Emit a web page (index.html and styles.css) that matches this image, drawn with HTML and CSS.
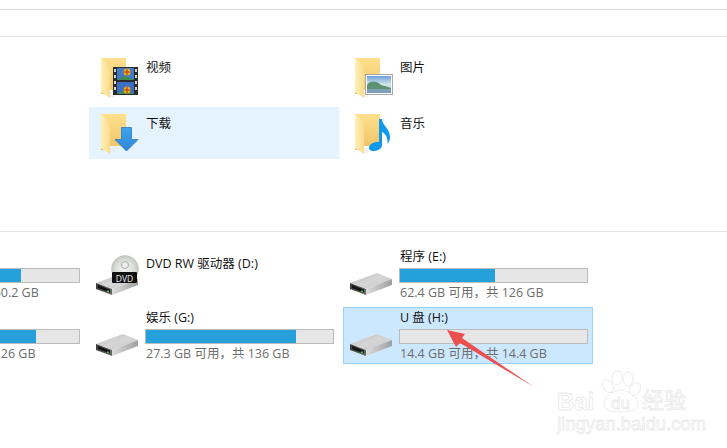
FILE: index.html
```html
<!DOCTYPE html>
<html lang="zh">
<head>
<meta charset="utf-8">
<title>此电脑</title>
<link rel="stylesheet" href="styles.css">
</head>
<body>
<svg class="defs" width="0" height="0" aria-hidden="true">
  <defs>
    <linearGradient id="fback" x1="0" y1="0" x2="0" y2="1"><stop offset="0" stop-color="#fee08d"/><stop offset="1" stop-color="#eec266"/></linearGradient>
    <linearGradient id="fflap" x1="0" y1="0" x2="1" y2="0"><stop offset="0" stop-color="#fff0b4"/><stop offset="1" stop-color="#fbdc8e"/></linearGradient>
    <linearGradient id="dtop" x1="0" y1="0" x2="1" y2="1"><stop offset="0" stop-color="#bdbdbd"/><stop offset=".5" stop-color="#d6d6d6"/><stop offset="1" stop-color="#c6c6c6"/></linearGradient>
    <linearGradient id="dright" x1="0" y1="0" x2="1" y2="0"><stop offset="0" stop-color="#dcdcdc"/><stop offset="1" stop-color="#a0a0a0"/></linearGradient>
    <linearGradient id="dleft" x1="0" y1="0" x2="1" y2="0"><stop offset="0" stop-color="#3c3c3c"/><stop offset="1" stop-color="#6a6a6a"/></linearGradient>
    <linearGradient id="sky" x1="0" y1="0" x2="0" y2="1"><stop offset="0" stop-color="#6f9fdc"/><stop offset=".5" stop-color="#d3e6ea"/><stop offset="1" stop-color="#8fb0bf"/></linearGradient>
    <linearGradient id="arrowblue" x1="0" y1="0" x2="0" y2="1"><stop offset="0" stop-color="#3fa3ee"/><stop offset="1" stop-color="#2f86d6"/></linearGradient>
    <radialGradient id="disc"><stop offset="0" stop-color="#f4f4f4"/><stop offset=".7" stop-color="#d8dcd8"/><stop offset="1" stop-color="#bfc5bf"/></radialGradient>
    <symbol id="folder" viewBox="0 0 48 48">
      <path d="M4 4H29V36H13V40H4Z" fill="url(#fback)"/>
      <path d="M4 4L13 12V44L4 38Z" fill="url(#fflap)"/>
      <path d="M13 44L17 43V38H13Z" fill="#e8e8e8" opacity=".6"/>
    </symbol>
    <symbol id="drive" viewBox="0 0 48 48">
      <path d="M3 36L30 26L45 32L19 42Z" fill="url(#dtop)"/>
      <path d="M19 42L45 32V38L19 48Z" fill="url(#dright)"/>
      <path d="M3 36L19 42V48L3 42Z" fill="url(#dleft)"/>
      <path d="M5 38L17 42.500V45.500L5 41Z" fill="#141414"/>
      <rect x="14" y="43.500" width="2" height="1.500" fill="#35d24a"/>
    </symbol>
  </defs>
</svg>

<main class="page">
  <div class="strip strip-top"></div>
  <div class="strip strip-ribbon"></div>

  <section class="folders">
    <div class="tile folder-tile">
      <svg class="icon" viewBox="0 0 48 48">
        <use href="#folder"/>
        <rect x="16" y="13" width="25" height="28" fill="#2b2b2b"/>
        <g fill="#d8d8c8"><rect x="17" y="15" width="2" height="3"/><rect x="17" y="21" width="2" height="3"/><rect x="17" y="27" width="2" height="3"/><rect x="17" y="33" width="2" height="3"/><rect x="38" y="15" width="2" height="3"/><rect x="38" y="21" width="2" height="3"/><rect x="38" y="27" width="2" height="3"/><rect x="38" y="33" width="2" height="3"/></g>
        <rect x="20" y="14" width="17" height="12" fill="#4478c8"/>
        <rect x="20" y="28" width="17" height="12" fill="#3c6ec4"/>
        <path d="M20 26L28 22L37 26ZM20 40L28 36L37 40Z" fill="#3d8f4c"/>
        <circle cx="30" cy="18" r="3.500" fill="#e8b818"/><circle cx="30" cy="36" r="3.500" fill="#e8b818"/>
        <path d="M26.500 18H33.500M30 14.500V21.500M26.500 36H33.500M30 32.500V39.500" stroke="#b8301c" stroke-width="1"/>
      </svg>
      <span class="folder-name">视频</span>
    </div>
    <div class="tile folder-tile">
      <svg class="icon" viewBox="0 0 48 48">
        <use href="#folder"/>
        <rect x="14.500" y="20.500" width="27" height="20" fill="#fff" stroke="#a8a8a8"/>
        <rect x="16" y="22" width="24" height="17" fill="url(#sky)"/>
        <path d="M16 31C20 26 26 27 30 31L40 34V35H16Z" fill="#5a9272"/>
        <rect x="16" y="35" width="24" height="4" fill="#7e9fb6"/>
      </svg>
      <span class="folder-name">图片</span>
    </div>
    <div class="tile folder-tile is-hover">
      <svg class="icon" viewBox="0 0 48 48">
        <use href="#folder"/>
        <path d="M24.500 17.500H34.500V29.500H41L29.500 41L18 29.500H24.500Z" fill="url(#arrowblue)" stroke="#2a78c4" stroke-width=".8"/>
      </svg>
      <span class="folder-name">下载</span>
    </div>
    <div class="tile folder-tile">
      <svg class="icon" viewBox="0 0 48 48">
        <use href="#folder"/>
        <path d="M28 9H31C31 15 39 19 39 27C39 30 38 32 36.500 34C37 28 35 24 31 22V35C31 39 26 41 22 41C19 41 18 39 18 38C18 34 23 31.500 28 32Z" fill="#0d9aec"/>
      </svg>
      <span class="folder-name">音乐</span>
    </div>
  </section>

  <section class="drives">
    <div class="tile drive-tile">
      <svg class="icon"><use href="#drive"/></svg>
      <div class="drive-body">
        <div class="drive-name">本地磁盘 (C:)</div>
        <div class="bar"><div class="fill" style="width:69%"></div></div>
        <div class="drive-size">15.6 GB 可用，共 50.2 GB</div>
      </div>
    </div>
    <div class="tile drive-tile">
      <svg class="icon" viewBox="0 0 48 48">
        <use href="#drive"/>
        <circle cx="32" cy="22" r="13.500" fill="url(#disc)" stroke="#bbb" stroke-width=".5"/>
        <circle cx="32" cy="18" r="3.500" fill="#eee" stroke="#aaa"/>
        <rect x="19" y="25" width="25" height="11" rx="1" fill="#111"/>
        <text class="dvd-label" x="31.500" y="34.500" text-anchor="middle">DVD</text>
      </svg>
      <div class="drive-body is-single">
        <div class="drive-name">DVD RW 驱动器 (D:)</div>
      </div>
    </div>
    <div class="tile drive-tile">
      <svg class="icon"><use href="#drive"/></svg>
      <div class="drive-body">
        <div class="drive-name">程序 (E:)</div>
        <div class="bar"><div class="fill" style="width:51%"></div></div>
        <div class="drive-size">62.4 GB 可用，共 126 GB</div>
      </div>
    </div>
    <div class="tile drive-tile">
      <svg class="icon"><use href="#drive"/></svg>
      <div class="drive-body">
        <div class="drive-name">软件 (F:)</div>
        <div class="bar"><div class="fill" style="width:77%"></div></div>
        <div class="drive-size">29.1 GB 可用，共 126 GB</div>
      </div>
    </div>
    <div class="tile drive-tile">
      <svg class="icon"><use href="#drive"/></svg>
      <div class="drive-body">
        <div class="drive-name">娱乐 (G:)</div>
        <div class="bar"><div class="fill" style="width:80%"></div></div>
        <div class="drive-size">27.3 GB 可用，共 136 GB</div>
      </div>
    </div>
    <div class="tile drive-tile is-selected">
      <svg class="icon"><use href="#drive"/></svg>
      <div class="drive-body">
        <div class="drive-name">U 盘 (H:)</div>
        <div class="bar"></div>
        <div class="drive-size">14.4 GB 可用，共 14.4 GB</div>
      </div>
    </div>
  </section>

  <svg class="annotation" viewBox="0 0 727 448" aria-hidden="true">
    <path d="M447 330L465 334L462 338L534 387L460 343L456 347Z" fill="#e9504e"/>
  </svg>

  <svg class="watermark" viewBox="0 0 727 448" aria-hidden="true">
    <g class="wm-shape">
      <ellipse cx="608" cy="386" rx="5" ry="7" transform="rotate(-30 608 386)"/>
      <ellipse cx="617" cy="378" rx="5" ry="7"/>
      <ellipse cx="628" cy="379" rx="5" ry="7"/>
      <ellipse cx="635" cy="389" rx="5" ry="7" transform="rotate(30 635 389)"/>
      <path d="M621 390C630 390 638 400 638 404C638 410 630 412 621 412C611 412 604 410 604 404C604 398 612 390 621 390Z"/>
    </g>
    <text class="wm-logo" x="557" y="410">Bai</text>
    <text class="wm-du" x="611" y="409">du</text>
    <text class="wm-cn" x="642" y="408">经验</text>
    <text class="wm-url" x="557" y="430">jingyan.baidu.com</text>
  </svg>
</main>
</body>
</html>
```
FILE: styles.css
```css
* { box-sizing: border-box; }
html, body { margin: 0; padding: 0; background: #fff; }
.defs { position: absolute; }
.page {
  position: relative;
  width: 727px;
  height: 448px;
  overflow: hidden;
  font-family: "Open Sans", "Noto Sans CJK SC", sans-serif;
  font-size: 12.500px;
  color: #1a1a1a;
}
.strip { border-bottom: 1px solid #e3e3e3; }
.strip-top { height: 10px; border-bottom-color: #d9d9d9; }
.strip-ribbon { height: 27px; }
.folders {
  display: grid;
  grid-template-columns: 250px 250px;
  grid-auto-rows: 52px;
  gap: 4px;
  height: 195px;
  padding: 14px 0 0 89px;
  border-bottom: 1px solid #e3e3e3;
}
.tile { display: flex; align-items: flex-start; border: 1px solid transparent; }
.icon { flex: none; width: 48px; height: 48px; }
.folder-tile { padding: 2px 0 0 7px; }
.folder-tile.is-hover { background: #e5f3ff; border-color: #e5f3ff; }
.folder-name { margin: 5px 0 0 1px; line-height: 18px; color: #111; }
.drives {
  display: grid;
  grid-template-columns: repeat(3, 250px);
  grid-auto-rows: 57px;
  gap: 4px;
  margin-left: -165px;
  padding-top: 14px;
}
.drive-tile { padding: 0 0 0 3px; }
.drive-tile.is-selected { background: #cce8ff; border-color: #99d1ff; }
.drive-body { margin-left: 4px; width: 189px; padding-top: 1px; }
.drive-body.is-single { padding-top: 8px; }
.drive-name { height: 18px; line-height: 17px; padding-left: 1px; color: #111; white-space: nowrap; }
.bar {
  height: 15px;
  margin-top: 2px;
  border: 1px solid #bcbcbc;
  background: #e6e6e6;
}
.fill { height: 100%; background: #26a0da; }
.drive-size { margin-top: 1px; padding-left: 1px; line-height: 18px; color: #6d6d6d; white-space: nowrap; }
.dvd-label { font-family: "Open Sans", sans-serif; font-size: 8.500px; fill: #f0f0f0; }
.annotation, .watermark { position: absolute; left: 0; top: 0; width: 727px; height: 448px; pointer-events: none; }
.wm-shape { fill: #fff; stroke: #ececec; stroke-width: 1; }
.wm-logo, .wm-du, .wm-cn, .wm-url { fill: #fff; stroke: #eaeaea; stroke-width: .8px; }
.wm-logo { font: 700 24px "Liberation Sans", sans-serif; }
.wm-du { font: 400 17px "Liberation Sans", sans-serif; }
.wm-cn { font: 400 22px "Noto Sans CJK SC", sans-serif; }
.wm-url { font: 400 18.500px "Liberation Sans", sans-serif; }
```
